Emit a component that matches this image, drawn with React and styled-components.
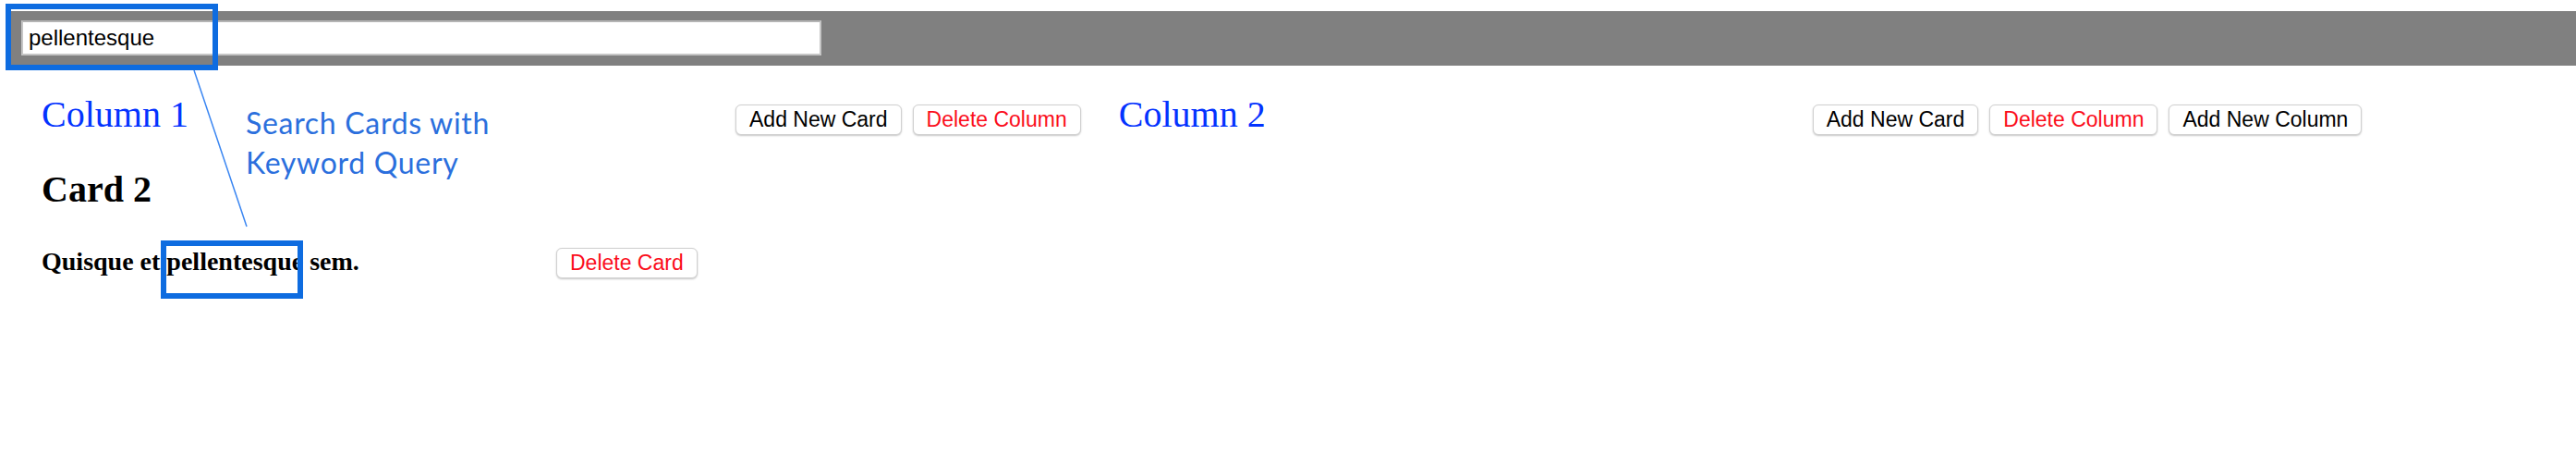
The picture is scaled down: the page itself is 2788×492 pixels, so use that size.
import styled, { createGlobalStyle } from "styled-components";

const GlobalStyle = createGlobalStyle`
  html, body {
    margin: 0;
    background: #fff;
  }
  body {
    font-family: "Liberation Serif", "Times New Roman", serif;
  }
`;

const Page = styled.div`
  position: relative;
  width: 2788px;
  height: 492px;
  overflow: hidden;
`;

const TopBar = styled.div`
  margin: 12px 0 0 12px;
  height: 59px;
  box-sizing: border-box;
  padding: 10px 11px;
  background: #808080;
  display: flex;
  align-items: flex-start;
`;

const SearchInput = styled.input`
  box-sizing: border-box;
  width: 866px;
  height: 38px;
  border: 2px solid #c6c6c6;
  border-top-color: #b4b4b4;
  padding: 0 6px;
  font: 24px "Liberation Sans", Arial, sans-serif;
  color: #000;
  background: #fff;
  outline: none;
`;

const Board = styled.div`
  display: flex;
  align-items: flex-start;
  gap: 41px;
  padding: 31px 0 0 45px;
`;

const Column = styled.section`
  display: flex;
  flex-direction: column;
`;

const ColumnHeader = styled.div`
  display: flex;
  align-items: baseline;
`;

const ColumnTitle = styled.h2`
  margin: 0;
  flex: none;
  width: 751px;
  font-family: "Liberation Serif", "Times New Roman", serif;
  font-size: 40px;
  line-height: 44px;
  font-weight: normal;
  color: #0433ff;
`;

const ButtonRow = styled.div`
  display: flex;
  align-items: baseline;
  gap: 12px;
`;

const Button = styled.button`
  height: 33px;
  box-sizing: border-box;
  padding: 0 14px;
  border: 1px solid #d0d0d0;
  border-radius: 6px;
  background: #fff;
  box-shadow: 0 1px 2px rgba(0, 0, 0, 0.22);
  font: 23px/31px "Liberation Sans", Arial, sans-serif;
  color: ${(p) => (p.$danger ? "#fb0d1b" : "#000")};
  cursor: pointer;
`;

const Card = styled.article`
  margin-top: 37px;
`;

const CardTitle = styled.h3`
  margin: 0;
  font-family: "Liberation Serif", "Times New Roman", serif;
  font-size: 40px;
  line-height: 44px;
  font-weight: bold;
`;

const CardBody = styled.div`
  display: flex;
  align-items: baseline;
  margin-top: 40px;
`;

const CardText = styled.p`
  margin: 0;
  flex: none;
  width: 557px;
  font-family: "Liberation Serif", "Times New Roman", serif;
  font-size: 28px;
  line-height: 32px;
  font-weight: bold;
`;

const HighlightBox = styled.div`
  position: absolute;
  box-sizing: border-box;
  left: ${(p) => p.$x}px;
  top: ${(p) => p.$y}px;
  width: ${(p) => p.$w}px;
  height: ${(p) => p.$h}px;
  border: 6px solid #0e6ce0;
  pointer-events: none;
`;

const CalloutLine = styled.svg`
  position: absolute;
  left: 0;
  top: 0;
  pointer-events: none;
`;

const CalloutText = styled.div`
  position: absolute;
  left: 266px;
  top: 111px;
  font: 32px/43px Lato, "Open Sans", sans-serif;
  letter-spacing: 0.7px;
  color: #2b6fdd;
`;

export default function App() {
  return (
    <Page>
      <GlobalStyle />
      <TopBar>
        <SearchInput defaultValue="pellentesque" />
      </TopBar>
      <Board>
        <Column>
          <ColumnHeader>
            <ColumnTitle>Column 1</ColumnTitle>
            <ButtonRow>
              <Button>Add New Card</Button>
              <Button $danger>Delete Column</Button>
            </ButtonRow>
          </ColumnHeader>
          <Card>
            <CardTitle>Card 2</CardTitle>
            <CardBody>
              <CardText>Quisque et pellentesque sem.</CardText>
              <Button $danger>Delete Card</Button>
            </CardBody>
          </Card>
        </Column>
        <Column>
          <ColumnHeader>
            <ColumnTitle>Column 2</ColumnTitle>
            <ButtonRow>
              <Button>Add New Card</Button>
              <Button $danger>Delete Column</Button>
              <Button>Add New Column</Button>
            </ButtonRow>
          </ColumnHeader>
        </Column>
      </Board>

      <HighlightBox $x={6} $y={4} $w={230} $h={72} />
      <HighlightBox $x={174} $y={260} $w={154} $h={63} />
      <CalloutLine width="400" height="300">
        <line x1="210" y1="76" x2="267" y2="245" stroke="#3a86f2" strokeWidth="1.5" />
      </CalloutLine>
      <CalloutText>
        Search Cards with
        <br />
        Keyword Query
      </CalloutText>
    </Page>
  );
}
